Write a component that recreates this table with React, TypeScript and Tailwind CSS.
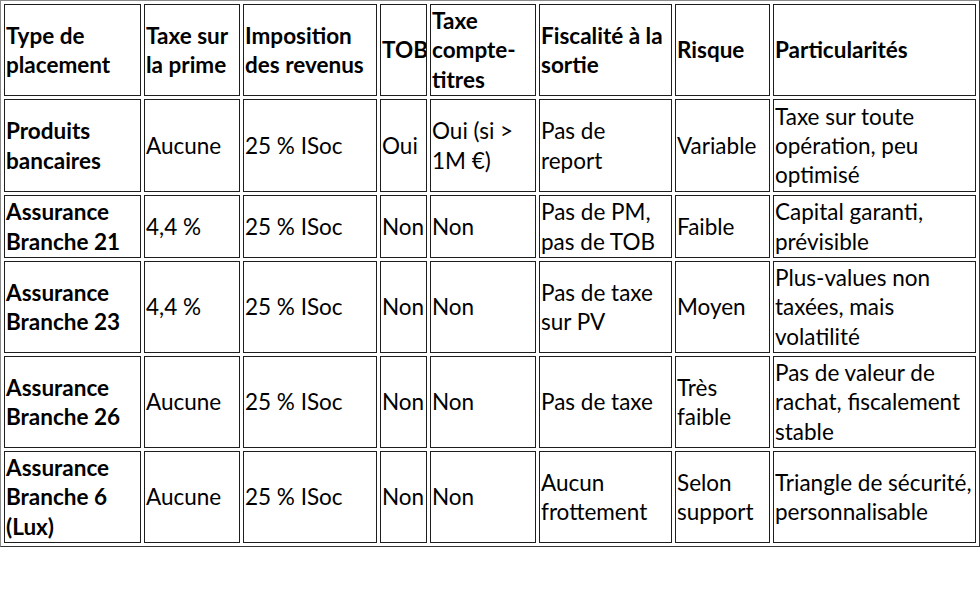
import React from "react";

const widths = ["w-[137px]", "w-[96px]", "w-[134px]", "w-[47px]", "w-[106px]", "w-[133px]", "w-[95px]", "w-[203px]"];
const heights = ["h-[93px]", "h-[63px]", "h-[92px]", "h-[92px]", "h-[92px]"];

const header: string[][] = [
  ["Type de", "placement"],
  ["Taxe sur", "la prime"],
  ["Imposition", "des revenus"],
  ["TOB"],
  ["Taxe", "compte-", "titres"],
  ["Fiscalité à la", "sortie"],
  ["Risque"],
  ["Particularités"],
];

const rows: string[][][] = [
  [["Produits", "bancaires"], ["Aucune"], ["25 % ISoc"], ["Oui"], ["Oui (si >", "1M €)"], ["Pas de", "report"], ["Variable"], ["Taxe sur toute", "opération, peu", "optimisé"]],
  [["Assurance", "Branche 21"], ["4,4 %"], ["25 % ISoc"], ["Non"], ["Non"], ["Pas de PM,", "pas de TOB"], ["Faible"], ["Capital garanti,", "prévisible"]],
  [["Assurance", "Branche 23"], ["4,4 %"], ["25 % ISoc"], ["Non"], ["Non"], ["Pas de taxe", "sur PV"], ["Moyen"], ["Plus-values non", "taxées, mais", "volatilité"]],
  [["Assurance", "Branche 26"], ["Aucune"], ["25 % ISoc"], ["Non"], ["Non"], ["Pas de taxe"], ["Très", "faible"], ["Pas de valeur de", "rachat, fiscalement", "stable"]],
  [["Assurance", "Branche 6", "(Lux)"], ["Aucune"], ["25 % ISoc"], ["Non"], ["Non"], ["Aucun", "frottement"], ["Selon", "support"], ["Triangle de sécurité,", "personnalisable"]],
];

function Lines({ lines }: { lines: string[] }) {
  return (
    <>
      {lines.map((l, i) => (
        <React.Fragment key={i}>
          {i > 0 && <br />}
          {l}
        </React.Fragment>
      ))}
    </>
  );
}

const cell = "border border-[#1e1e1e] p-px align-middle text-left whitespace-nowrap overflow-hidden";

export default function App() {
  return (
    <div className="bg-white w-[980px] h-[599px] text-black" style={{ fontFamily: "Lato, 'Noto Sans', sans-serif" }}>
      <table className="table-fixed w-[980px] border-separate border-spacing-[3px] border border-t-[#8a8a8a] border-l-[#8a8a8a] border-r-[#333333] border-b-[#333333] text-[22.5px] leading-[29.3px]">
        <thead>
          <tr className="h-[92px]">
            {header.map((h, i) => (
              <th key={i} className={`${cell} ${widths[i]} font-bold`}>
                <Lines lines={h} />
              </th>
            ))}
          </tr>
        </thead>
        <tbody>
          {rows.map((r, ri) => (
            <tr key={ri} className={heights[ri]}>
              {r.map((c, ci) => (
                <td key={ci} className={`${cell} ${ci === 0 ? "font-bold" : "font-normal"}`}>
                  <Lines lines={c} />
                </td>
              ))}
            </tr>
          ))}
        </tbody>
      </table>
    </div>
  );
}
